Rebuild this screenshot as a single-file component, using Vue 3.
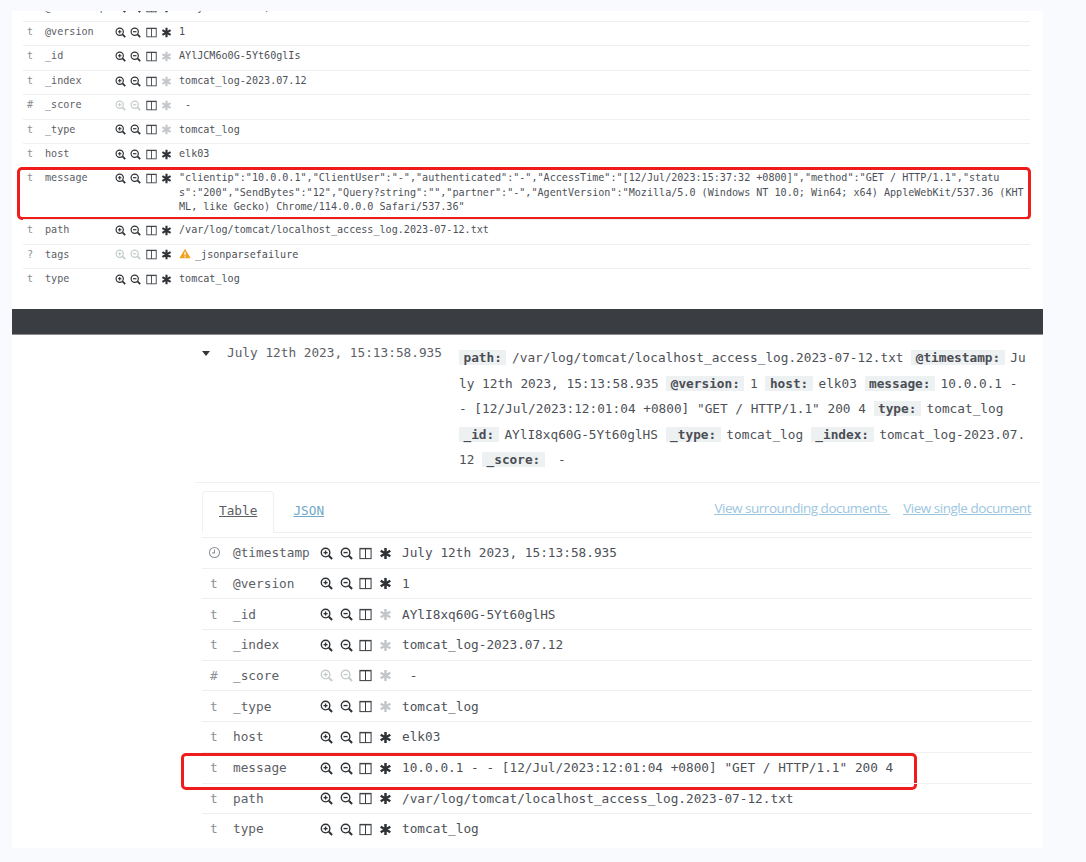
<script setup>
const topRows = [
  { t: 't', n: '@version', v: '1', star: true },
  { t: 't', n: '_id', v: 'AYlJCM6o0G-5Yt60glIs' },
  { t: 't', n: '_index', v: 'tomcat_log-2023.07.12' },
  { t: '#', n: '_score', v: ' -', off: true },
  { t: 't', n: '_type', v: 'tomcat_log' },
  { t: 't', n: 'host', v: 'elk03', star: true },
  { t: 't', n: 'message', star: true, mark: true, lines: [
    '"clientip":"10.0.0.1","ClientUser":"-","authenticated":"-","AccessTime":"[12/Jul/2023:15:37:32 +0800]","method":"GET / HTTP/1.1","statu',
    's":"200","SendBytes":"12","Query?string":"","partner":"-","AgentVersion":"Mozilla/5.0 (Windows NT 10.0; Win64; x64) AppleWebKit/537.36 (KHT',
    'ML, like Gecko) Chrome/114.0.0.0 Safari/537.36"'
  ] },
  { t: 't', n: 'path', v: '/var/log/tomcat/localhost_access_log.2023-07-12.txt', star: true },
  { t: '?', n: 'tags', v: '_jsonparsefailure', star: true, off: true, warn: true },
  { t: 't', n: 'type', v: 'tomcat_log', star: true }
]
const bottomRows = [
  { t: 'clock', n: '@timestamp', v: 'July 12th 2023, 15:13:58.935', star: true },
  { t: 't', n: '@version', v: '1', star: true },
  { t: 't', n: '_id', v: 'AYlI8xq60G-5Yt60glHS' },
  { t: 't', n: '_index', v: 'tomcat_log-2023.07.12' },
  { t: '#', n: '_score', v: ' -', off: true },
  { t: 't', n: '_type', v: 'tomcat_log' },
  { t: 't', n: 'host', v: 'elk03', star: true },
  { t: 't', n: 'message', v: '10.0.0.1 - - [12/Jul/2023:12:01:04 +0800] "GET / HTTP/1.1" 200 4', star: true, mark: true },
  { t: 't', n: 'path', v: '/var/log/tomcat/localhost_access_log.2023-07-12.txt', star: true },
  { t: 't', n: 'type', v: 'tomcat_log', star: true }
]
const summary = [
  ['path:', '/var/log/tomcat/localhost_access_log.2023-07-12.txt'],
  ['@timestamp:', 'July 12th 2023, 15:13:58.935'],
  ['@version:', '1'],
  ['host:', 'elk03'],
  ['message:', '10.0.0.1 - - [12/Jul/2023:12:01:04 +0800] "GET / HTTP/1.1" 200 4'],
  ['type:', 'tomcat_log'],
  ['_id:', 'AYlI8xq60G-5Yt60glHS'],
  ['_type:', 'tomcat_log'],
  ['_index:', 'tomcat_log-2023.07.12'],
  ['_score:', ' -']
]
</script>

<template>
  <div class="card">
    <section class="top">
      <div class="clipped">
        <span class="type">t</span><span class="name">@timestamp</span>
        <span class="icons">
          <svg viewBox="0 0 14 14"><circle cx="6" cy="6" r="4.6" /><path d="M9.5 9.5L13 13" class="thick" /><path d="M3.8 6H8.2M6 3.8V8.2" /></svg>
          <svg viewBox="0 0 14 14"><circle cx="6" cy="6" r="4.6" /><path d="M9.5 9.5L13 13" class="thick" /><path d="M3.8 6H8.2" /></svg>
          <svg viewBox="0 0 14 14"><rect x="1" y="1.5" width="12" height="11" class="thin" /><path d="M7 1.5V12.5" class="thin" /><path d="M1 2H13" class="thin" /></svg>
          <svg viewBox="0 0 14 14"><path d="M7 1V13M1.8 4L12.2 10M12.2 4L1.8 10" class="star" /></svg>
        </span>
        <span class="val">July 12th 2023, 15:37:32.519</span>
      </div>
      <div v-for="r in topRows" :key="r.n" class="row" :class="{ multi: r.lines }">
        <span class="type">{{ r.t }}</span>
        <span class="name">{{ r.n }}</span>
        <span class="icons">
          <svg viewBox="0 0 14 14" :class="{ off: r.off }"><circle cx="6" cy="6" r="4.6" /><path d="M9.5 9.5L13 13" class="thick" /><path d="M3.8 6H8.2M6 3.8V8.2" /></svg>
          <svg viewBox="0 0 14 14" :class="{ off: r.off }"><circle cx="6" cy="6" r="4.6" /><path d="M9.5 9.5L13 13" class="thick" /><path d="M3.8 6H8.2" /></svg>
          <svg viewBox="0 0 14 14"><rect x="1" y="1.5" width="12" height="11" class="thin" /><path d="M7 1.5V12.5" class="thin" /><path d="M1 2H13" class="thin" /></svg>
          <svg viewBox="0 0 14 14" :class="{ faint: !r.star }"><path d="M7 1V13M1.8 4L12.2 10M12.2 4L1.8 10" class="star" /></svg>
        </span>
        <span class="val">
          <template v-if="r.lines"><span v-for="l in r.lines" :key="l" class="line">{{ l }}</span></template>
          <template v-else>
            <svg v-if="r.warn" class="warn" viewBox="0 0 14 12"><path d="M7 .5L13.6 11.5H.4Z" /><path d="M7 4V8M7 9.2V10.6" /></svg>{{ r.v }}
          </template>
        </span>
        <i v-if="r.mark" class="mark"></i>
      </div>
    </section>

    <div class="band"></div>

    <section class="detail">
      <div class="summary">
        <span class="caret"></span>
        <span class="date">July 12th 2023, 15:13:58.935</span>
        <div class="pairs">
          <template v-for="p in summary" :key="p[0]"><span class="pill">{{ p[0] }}</span>{{ ' ' + p[1] + ' ' }}</template>
        </div>
      </div>
      <div class="panel">
        <nav class="tabs">
          <a class="tab active">Table</a>
          <a class="tab">JSON</a>
          <span class="links"><a>View surrounding documents </a><a>View single document</a></span>
        </nav>
        <div class="table">
          <div v-for="r in bottomRows" :key="r.n" class="row big">
            <span class="type">
              <svg v-if="r.t === 'clock'" class="clock" viewBox="0 0 14 14"><circle cx="7" cy="7" r="5.4" /><path d="M7 3.8V7.4H4.6" /></svg>
              <template v-else>{{ r.t }}</template>
            </span>
            <span class="name">{{ r.n }}</span>
            <span class="icons">
              <svg viewBox="0 0 14 14" :class="{ off: r.off }"><circle cx="6" cy="6" r="4.6" /><path d="M9.5 9.5L13 13" class="thick" /><path d="M3.8 6H8.2M6 3.8V8.2" /></svg>
              <svg viewBox="0 0 14 14" :class="{ off: r.off }"><circle cx="6" cy="6" r="4.6" /><path d="M9.5 9.5L13 13" class="thick" /><path d="M3.8 6H8.2" /></svg>
              <svg viewBox="0 0 14 14"><rect x="1" y="1.5" width="12" height="11" class="thin" /><path d="M7 1.5V12.5" class="thin" /><path d="M1 2H13" class="thin" /></svg>
              <svg viewBox="0 0 14 14" :class="{ faint: !r.star }"><path d="M7 1V13M1.8 4L12.2 10M12.2 4L1.8 10" class="star" /></svg>
            </span>
            <span class="val">{{ r.v }}</span>
            <i v-if="r.mark" class="mark"></i>
          </div>
        </div>
      </div>
    </section>
  </div>
</template>

<style>
html, body { background: #f8fafd; margin: 0; }
</style>

<style scoped>
.card {
  margin: 11px 43px 0 12px;
  height: 837px;
  background: #fff;
  font-family: "DejaVu Sans Mono", monospace;
  color: #5c6066;
  overflow: hidden;
}
.top { height: 298px; padding: 0 13px 0 11px; box-sizing: border-box; }
.clipped {
  height: 10px; overflow: hidden; display: flex; align-items: flex-end;
  font-size: 10.1px; line-height: 10px;
}
.clipped .type, .clipped .name, .clipped .icons, .clipped .val { position: relative; top: -8px; }
.clipped .icons { top: -6px; }
.row {
  position: relative; display: flex; align-items: flex-start; box-sizing: border-box;
  border-top: 1px solid #eeeff1; font-size: 10.1px; line-height: 14.5px;
  padding: 3px 0 5.9px; white-space: pre;
}
.row.multi { padding-bottom: 4.4px; }
.type { width: 22px; padding-left: 4px; box-sizing: border-box; flex: none; color: #8b9095; }
.name { width: 69.6px; flex: none; }
.icons { display: flex; gap: 4.6px; width: 64.4px; flex: none; align-items: center; height: 14.5px; }
.icons svg { width: 11px; height: 11px; flex: none; }
.val { flex: 1; color: #4d5157; }
.line { display: block; }
svg circle, svg rect, svg path { fill: none; stroke: #2e3236; stroke-width: 1.5; }
svg .thick { stroke-width: 2.2; }
svg .thin { stroke: #3a3e42; stroke-width: 1.1; }
svg .star { stroke-width: 2.7; }
svg.off circle, svg.off path { stroke: #c4cccc; }
svg.faint .star { stroke: #c3c7cb; }
svg.warn { width: 12px; height: 11px; margin-right: 4px; vertical-align: -1px; }
svg.warn path:first-child { fill: #eea320; stroke: none; }
svg.warn path:last-child { stroke: #fff; stroke-width: 1.4; }
.mark {
  position: absolute; left: -6px; right: -1px; top: -1px; bottom: -1px;
  border: 3px solid #f01c1c; border-radius: 5px; pointer-events: none;
}
.band { height: 26px; background: #3a3d42; border-bottom: 1px solid #8a8c90; box-sizing: border-box; }
.detail { margin-left: 183px; margin-right: 3px; }
.summary {
  display: flex; align-items: flex-start; height: 148px; box-sizing: border-box;
  padding: 10px 11px 0 7px; font-size: 12.76px; border-bottom: 1px solid #f0f1f2;
}
.caret {
  width: 0; height: 0; margin-top: 6px; flex: none;
  border-left: 4px solid transparent; border-right: 4px solid transparent; border-top: 5px solid #33373b;
}
.date { width: 232px; flex: none; margin-left: 17px; line-height: 18px; margin-top: -1px; }
.pairs { flex: 1; line-height: 25.6px; word-break: break-all; white-space: pre-wrap; color: #4d5157; }
.pill {
  display: inline-block; background: #eef1f2; font-weight: 700; padding: 0 4.5px; margin-right: -2px; line-height: 15px; color: #4a4e54;
}
.panel { padding: 8px 8px 0 7px; }
.tabs {
  display: flex; align-items: stretch; height: 42px; box-sizing: border-box;
  border-bottom: 1px solid #eeeff1; font-size: 12.76px; line-height: 38px;
}
.tab { padding: 0 16px 0 16px; margin-right: 2px; color: #6fa8c8; text-decoration: underline; border: 1px solid transparent; }
.tab.active { color: #5c6066; border-color: #eeeff1; border-bottom: 1px solid #fff; border-radius: 4px 4px 0 0; margin-bottom: -1px; }
.links { margin-left: auto; margin-right: 1px; display: flex; gap: 13px; font-family: "Open Sans", sans-serif; font-size: 13.5px; letter-spacing: -0.47px; color: #9cc6df; line-height: 34px; text-decoration: underline; white-space: pre; }
.links a { text-decoration: underline; }
.table { margin-top: 4px; }
.row.big { font-size: 12.76px; line-height: 18px; padding: 6.2px 0 5.5px; height: 30.7px; }
.big .type { width: 31px; padding-left: 8px; }
.big .name { width: 87px; }
.big .icons { gap: 6.6px; width: 82px; height: 18px; }
.big .icons svg { width: 13px; height: 13px; }
.big .mark { left: -21px; right: 115px; top: 0; bottom: -7px; }
.clock { width: 13px; height: 13px; vertical-align: -2px; margin-left: -2px; }
.clock circle, .clock path { stroke: #8b9095; stroke-width: 1.1; }
</style>
